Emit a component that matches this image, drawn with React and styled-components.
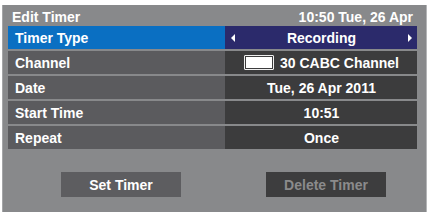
import React from "react";
import styled, { createGlobalStyle } from "styled-components";

const Global = createGlobalStyle`
  html, body { margin: 0; padding: 0; background: #ffffff; }
  body { font-family: "Liberation Sans", Arial, sans-serif; }
`;

const Screen = styled.div`
  width: 429px;
  height: 212px;
  padding: 5px 0 0 2px;
  box-sizing: border-box;
  overflow: hidden;
`;

const Panel = styled.div`
  width: 425px;
  height: 207px;
  box-sizing: border-box;
  background: #88898b;
  border-left: 1px solid #a4a5a7;
  border-right: 1px solid #b4b5b7;
  padding: 0 9px 0 5px;
  display: flex;
  flex-direction: column;
`;

const Header = styled.div`
  height: 21px;
  display: flex;
  align-items: center;
  justify-content: space-between;
  padding: 2px 4px 0 4px;
  box-sizing: border-box;
  color: #ffffff;
  font-weight: bold;
  font-size: 14px;
`;

const Table = styled.div`
  display: flex;
  flex-direction: column;
  gap: 2px;
`;

const Row = styled.div`
  display: grid;
  grid-template-columns: 217px 1fr;
  height: ${(p) => (p.$first ? 23 : 23)}px;
  color: #ffffff;
  font-weight: bold;
  font-size: 14px;
`;

const Label = styled.div`
  background: ${(p) => (p.$active ? "#0a6fc2" : "#5b5b5e")};
  display: flex;
  align-items: center;
  padding-left: 7px;
`;

const Value = styled.div`
  background: ${(p) => (p.$active ? "#2b2a6b" : "#3c3c3d")};
  display: flex;
  align-items: center;
  justify-content: ${(p) => (p.$spread ? "space-between" : "center")};
  padding: 0 5px 0 6px;
  gap: 6px;
`;

const Arrow = styled.span`
  width: 0;
  height: 0;
  border-top: 4px solid transparent;
  border-bottom: 4px solid transparent;
  ${(p) =>
    p.$dir === "left"
      ? "border-right: 4px solid #ffffff;"
      : "border-left: 4px solid #ffffff;"}
`;

const ChannelIcon = styled.span`
  width: 30px;
  height: 15px;
  box-sizing: border-box;
  border: 1.5px solid #f0f0f0;
  border-radius: 1px;
  padding: 1px;
  display: flex;
  &::after {
    content: "";
    flex: 1;
    background: #ffffff;
  }
`;

const Buttons = styled.div`
  display: flex;
  gap: 85px;
  margin-top: 23px;
  padding-left: 53px;
`;

const Button = styled.div`
  width: 120px;
  height: 25px;
  display: flex;
  align-items: center;
  justify-content: center;
  font-weight: bold;
  font-size: 14px;
  background: ${(p) => (p.$disabled ? "#3d3d3e" : "#5d5d60")};
  color: ${(p) => (p.$disabled ? "#8b8b8c" : "#ffffff")};
`;

const rows = [
  { label: "Channel", value: "30 CABC Channel", icon: true },
  { label: "Date", value: "Tue, 26 Apr 2011" },
  { label: "Start Time", value: "10:51" },
  { label: "Repeat", value: "Once" },
];

export default function App() {
  return (
    <Screen>
      <Global />
      <Panel>
        <Header>
          <span>Edit Timer</span>
          <span>10:50 Tue, 26 Apr</span>
        </Header>
        <Table>
          <Row>
            <Label $active>Timer Type</Label>
            <Value $active $spread>
              <Arrow $dir="left" />
              <span>Recording</span>
              <Arrow $dir="right" />
            </Value>
          </Row>
          {rows.map((r) => (
            <Row key={r.label}>
              <Label>{r.label}</Label>
              <Value>
                {r.icon && <ChannelIcon />}
                <span>{r.value}</span>
              </Value>
            </Row>
          ))}
        </Table>
        <Buttons>
          <Button>Set Timer</Button>
          <Button $disabled>Delete Timer</Button>
        </Buttons>
      </Panel>
    </Screen>
  );
}
